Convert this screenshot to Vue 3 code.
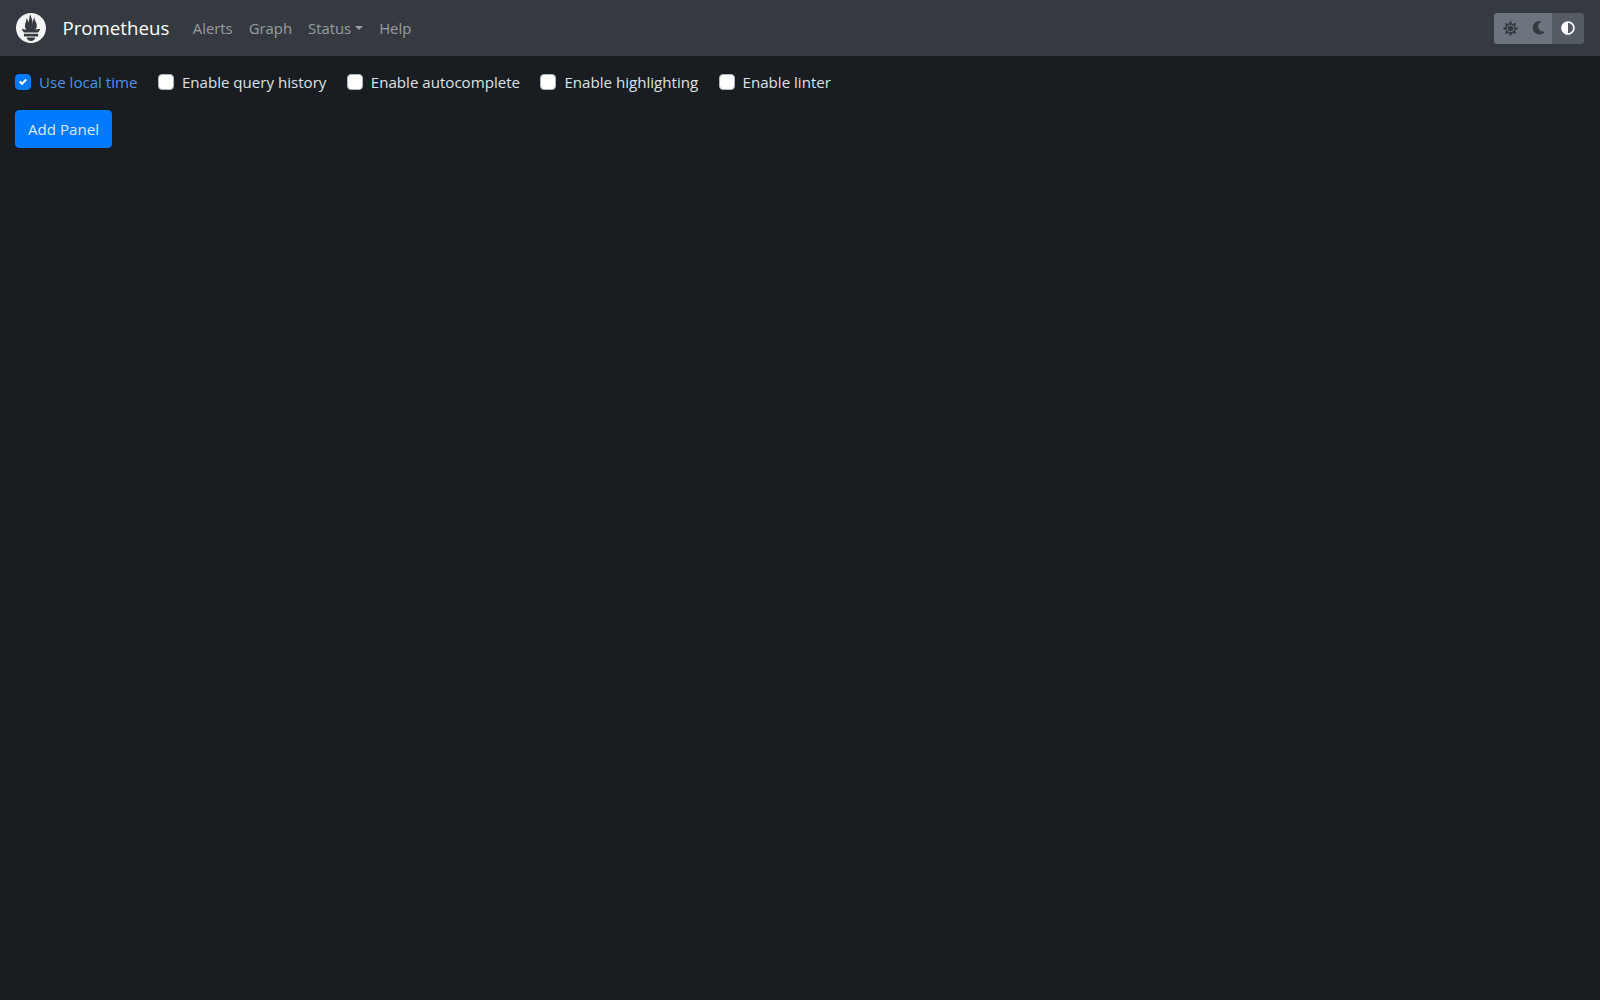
<script setup>
const nav = ['Alerts', 'Graph']
const options = [
  { label: 'Use local time', checked: true },
  { label: 'Enable query history', checked: false },
  { label: 'Enable autocomplete', checked: false },
  { label: 'Enable highlighting', checked: false },
  { label: 'Enable linter', checked: false },
]
</script>

<template>
  <div class="page">
    <nav class="navbar">
      <svg class="logo" viewBox="0 0 256 256"><path fill="#f5f5f5" d="M128.001 0C57.308 0 0 57.307 0 128s57.308 128 128.001 128C198.693 256 256 198.693 256 128S198.693 0 128.001 0zm0 239.563c-20.115 0-36.421-13.437-36.421-30.008h72.842c0 16.571-16.306 30.008-36.421 30.008zm60.154-39.94H67.84v-21.845h120.315v21.845zm-.432-33.087H68.185c-.398-.458-.804-.91-1.188-1.375-12.315-14.954-15.216-22.76-18.032-30.716-.048-.262 14.933 3.06 25.556 5.45 0 0 5.466 1.265 13.458 2.722-7.673-8.994-12.23-20.428-12.23-32.116 0-25.658 19.68-48.079 12.58-66.201 6.91.562 14.3 14.583 14.8 36.505 7.346-10.152 10.42-28.69 10.42-40.056 0-11.769 7.755-25.44 15.512-25.907-6.915 11.396 1.79 21.165 9.53 45.4 2.902 9.103 2.532 24.423 4.772 34.138.744-20.178 4.213-49.62 17.014-59.784-5.647 12.8.836 28.818 5.27 36.518 7.154 12.424 11.49 21.836 11.49 39.638 0 11.936-4.407 23.173-11.84 31.958 8.452-1.586 14.289-3.016 14.289-3.016l27.45-5.355c.002-.002-3.987 16.401-19.314 32.197z"/></svg>
      <a class="brand">Prometheus</a>
      <div class="links">
        <a v-for="n in nav" :key="n" class="link">{{ n }}</a>
        <a class="link">Status<span class="caret"></span></a>
        <a class="link">Help</a>
      </div>
      <div class="themes">
        <button class="theme">
          <svg viewBox="0 0 512 512" class="ico sun"><path fill="#343a40" d="M256 160c-52.9 0-96 43.1-96 96s43.1 96 96 96 96-43.1 96-96-43.1-96-96-96zm246.4 80.5l-94.7-47.3 33.5-100.4c4.5-13.6-8.4-26.5-21.9-21.9l-100.4 33.5-47.4-94.8c-6.4-12.8-24.6-12.8-31 0l-47.3 94.7L92.7 70.8c-13.6-4.5-26.5 8.4-21.9 21.9l33.5 100.4-94.7 47.4c-12.8 6.4-12.8 24.6 0 31l94.7 47.3-33.5 100.5c-4.5 13.6 8.4 26.5 21.9 21.9l100.4-33.5 47.3 94.7c6.4 12.8 24.6 12.8 31 0l47.3-94.7 100.4 33.5c13.6 4.5 26.5-8.4 21.9-21.9l-33.5-100.4 94.7-47.3c13-6.5 13-24.7.2-31.1zm-155.9 106c-49.9 49.9-131.1 49.9-181 0-49.9-49.9-49.9-131.1 0-181 49.9-49.9 131.1-49.9 181 0 49.9 49.9 49.9 131.1 0 181z"/></svg>
        </button>
        <button class="theme moon">
          <svg viewBox="0 0 512 512" class="ico"><path fill="#343a40" d="M283.211 512c78.962 0 151.079-35.925 198.857-94.792 7.068-8.708-.639-21.43-11.562-19.35-124.203 23.654-238.262-71.576-238.262-196.954 0-72.222 38.662-138.635 101.498-174.394 9.686-5.512 7.25-20.197-3.756-22.23A258.156 258.156 0 0 0 283.211 0c-141.309 0-256 114.511-256 256 0 141.309 114.511 256 256 256z"/></svg>
        </button>
        <button class="theme active">
          <svg viewBox="0 0 512 512" class="ico"><path fill="#fff" d="M8 256c0 136.966 111.033 248 248 248s248-111.034 248-248S392.966 8 256 8 8 119.033 8 256zm248 184V72c101.705 0 184 82.311 184 184 0 101.705-82.311 184-184 184z"/></svg>
        </button>
      </div>
    </nav>
    <main class="content">
      <div class="options">
        <label v-for="o in options" :key="o.label" class="opt" :class="{ on: o.checked }">
          <span class="box">
            <svg v-if="o.checked" viewBox="0 0 8 8" class="check"><path fill="#fff" d="M6.564.75l-3.59 3.612-1.538-1.55L0 4.26l2.974 2.99L8 2.193z"/></svg>
          </span>
          {{ o.label }}
        </label>
      </div>
      <button class="add">Add Panel</button>
    </main>
  </div>
</template>

<style>
html, body { margin: 0; background: #191d21; }
</style>

<style scoped>
.page {
  min-height: 1000px;
  background: #191d21;
  font-family: "Open Sans", "Noto Sans", sans-serif;
  font-size: 15.1px;
  line-height: 24px;
  color: #dfe2e5;
}
.navbar {
  display: flex;
  align-items: center;
  height: 56px;
  box-sizing: border-box;
  padding: 0 16px;
  background: #343a40;
}
.logo { width: 30px; height: 30px; margin-right: 16px; }
.brand { font-size: 18.7px; color: #fff; margin-right: 15.5px; margin-left: 0.4px; }
.links { display: flex; flex: 1; font-size: 14.85px; }
.link { padding: 8px; color: rgba(255, 255, 255, 0.5); }
.caret {
  display: inline-block;
  margin-left: 4px;
  vertical-align: 4px;
  border-top: 4.8px solid;
  border-left: 4.8px solid transparent;
  border-right: 4.8px solid transparent;
}
.themes { display: flex; border-radius: 3.2px; overflow: hidden; }
.theme {
  width: 32px;
  height: 31px;
  padding: 0;
  border: 0;
  background: #6c757d;
  display: flex;
  align-items: center;
  justify-content: center;
}
.theme.moon { width: 26px; }
.theme.active { background: #545b62; }
.ico { width: 14px; height: 14px; flex: none; }
.ico.sun { width: 15px; height: 15px; }
.moon .ico { width: 13.5px; height: 13.5px; }
.content { padding: 14px 15px; }
.options { display: flex; gap: 20.4px; height: 24px; }
.opt { display: flex; align-items: center; gap: 8px; }
.opt.on { color: #4a94e8; }
.box {
  width: 16px;
  height: 16px;
  box-sizing: border-box;
  border-radius: 4px;
  background: #fff;
  border: 1px solid #adb5bd;
  display: flex;
  align-items: center;
  justify-content: center;
}
.on .box { background: #007bff; border-color: #007bff; }
.check { width: 8px; height: 8px; }
.add {
  display: block;
  margin-top: 16px;
  height: 38px;
  padding: 0 12px;
  border: 1px solid #007bff;
  border-radius: 4px;
  background: #007bff;
  color: #dde8f5;
  font: inherit;
}
</style>
